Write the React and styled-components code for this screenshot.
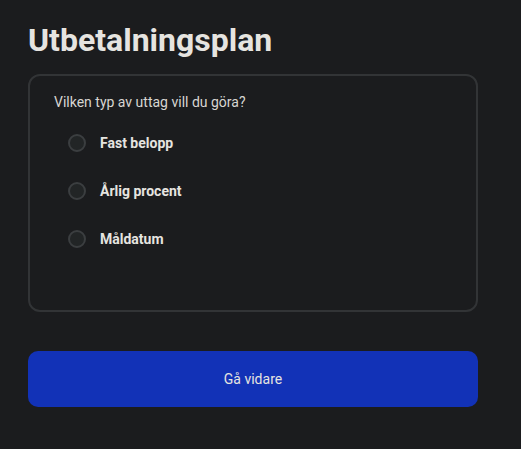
import React, { useState } from 'react';
import styled, { createGlobalStyle } from 'styled-components';

const GlobalStyle = createGlobalStyle`
    html, body {
        margin: 0;
        background: #1b1c1e;
    }
    body {
        font-family: Roboto, "Liberation Sans", sans-serif;
        color: #e3e1dd;
    }
`;

const Page = styled.div`
    padding: 21px 43px 40px 28px;
    display: flex;
    flex-direction: column;
`;

const Title = styled.h1`
    margin: 0 0 15px;
    font-size: 32px;
    line-height: 38px;
    font-weight: 700;
    color: #e6e4e0;
`;

const Card = styled.fieldset`
    margin: 0;
    border: 2px solid #323436;
    border-radius: 12px;
    padding: 16px 24px 46px;
    height: 238px;
    box-sizing: border-box;
    background: #1b1c1e;
`;

const Question = styled.legend`
    float: left;
    width: 100%;
    padding: 0;
    font-size: 14px;
    line-height: 20px;
    color: #d8d6d2;
    margin-bottom: 7px;
`;

const Options = styled.div`
    clear: both;
    display: flex;
    flex-direction: column;
    padding-left: 14px;
`;

const Option = styled.label`
    display: flex;
    align-items: center;
    gap: 14px;
    height: 48px;
    font-size: 14px;
    font-weight: 700;
    color: #e6e4e0;
    cursor: pointer;
`;

const Radio = styled.span`
    width: 18px;
    height: 18px;
    box-sizing: border-box;
    border-radius: 50%;
    border: 2px solid ${p => (p.$checked ? '#3d5afe' : '#3b3e40')};
    background: #222526;
    display: flex;
    align-items: center;
    justify-content: center;

    &::after {
        content: '';
        width: 8px;
        height: 8px;
        border-radius: 50%;
        background: ${p => (p.$checked ? '#3d5afe' : 'transparent')};
    }
`;

const Next = styled.button`
    margin-top: 39px;
    height: 56px;
    border: none;
    border-radius: 10px;
    background: #1232b7;
    color: #e6e4e0;
    font-family: inherit;
    font-size: 14px;
    cursor: pointer;
`;

const options = ['Fast belopp', 'Årlig procent', 'Måldatum'];

export default function App() {
    const [choice, setChoice] = useState(null);
    return (
        <>
            <GlobalStyle />
            <Page>
                <Title>Utbetalningsplan</Title>
                <Card>
                    <Question>Vilken typ av uttag vill du göra?</Question>
                    <Options>
                        {options.map(o => (
                            <Option key={o} onClick={() => setChoice(o)}>
                                <Radio $checked={choice === o} />
                                {o}
                            </Option>
                        ))}
                    </Options>
                </Card>
                <Next>Gå vidare</Next>
            </Page>
        </>
    );
}
